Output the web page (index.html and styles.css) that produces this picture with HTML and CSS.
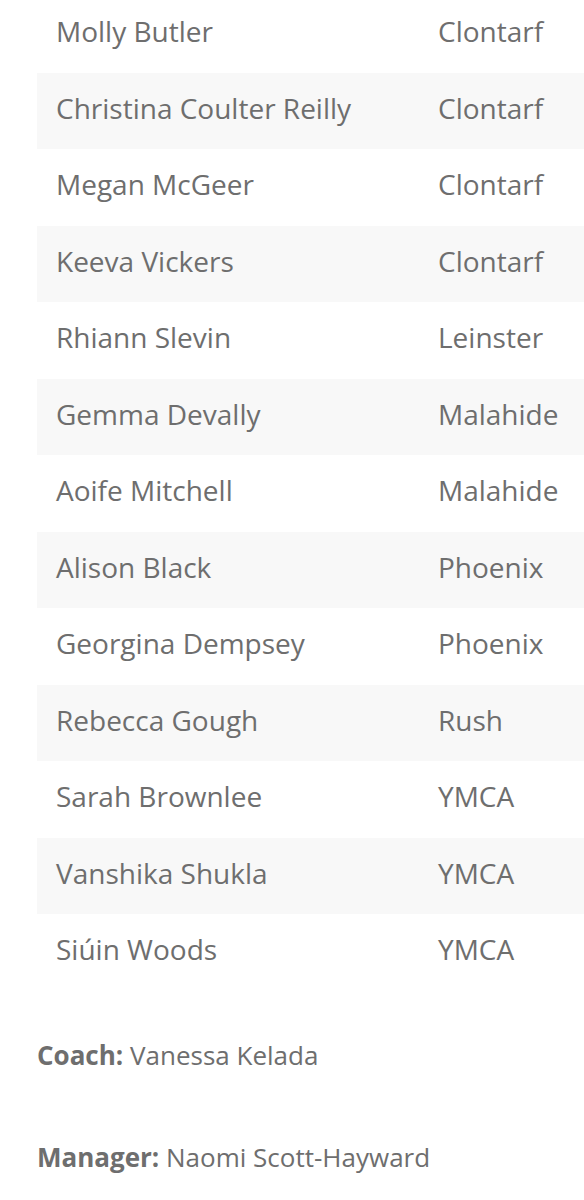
FILE: index.html
```html
<!DOCTYPE html>
<html>
<head>
<meta charset="utf-8">
<link rel="stylesheet" href="styles.css">
</head>
<body>
<div class="page">
  <table class="squad">
    <tbody>
      <tr><td class="name">Molly Butler</td><td class="club">Clontarf</td></tr>
      <tr><td class="name">Christina Coulter Reilly</td><td class="club">Clontarf</td></tr>
      <tr><td class="name">Megan McGeer</td><td class="club">Clontarf</td></tr>
      <tr><td class="name">Keeva Vickers</td><td class="club">Clontarf</td></tr>
      <tr><td class="name">Rhiann Slevin</td><td class="club">Leinster</td></tr>
      <tr><td class="name">Gemma Devally</td><td class="club">Malahide</td></tr>
      <tr><td class="name">Aoife Mitchell</td><td class="club">Malahide</td></tr>
      <tr><td class="name">Alison Black</td><td class="club">Phoenix</td></tr>
      <tr><td class="name">Georgina Dempsey</td><td class="club">Phoenix</td></tr>
      <tr><td class="name">Rebecca Gough</td><td class="club">Rush</td></tr>
      <tr><td class="name">Sarah Brownlee</td><td class="club">YMCA</td></tr>
      <tr><td class="name">Vanshika Shukla</td><td class="club">YMCA</td></tr>
      <tr><td class="name">Siúin Woods</td><td class="club">YMCA</td></tr>
    </tbody>
  </table>
  <p class="staff"><strong>Coach:</strong> Vanessa Kelada</p>
  <p class="staff"><strong>Manager:</strong> Naomi Scott-Hayward</p>
</div>
</body>
</html>
```
FILE: styles.css
```css
html, body {
  margin: 0;
  padding: 0;
  background: #ffffff;
}
body {
  font-family: "Open Sans", "Noto Sans", sans-serif;
  color: #6e6e6e;
  overflow: hidden;
}
.page {
  padding-left: 37px;
}
.squad {
  border-collapse: collapse;
  width: 547px;
  margin-top: -4px;
  font-size: 28px;
}
.squad tr {
  height: 76.5px;
}
.squad tr:nth-child(even) {
  background: #f8f8f8;
}
.squad td {
  padding: 0 0 6px 19px;
  vertical-align: middle;
  white-space: nowrap;
}
.squad td.name {
  width: 363px;
}
.staff {
  margin: 0;
  font-size: 26px;
  line-height: 36px;
}
.staff:first-of-type {
  margin-top: 46px;
}
.staff + .staff {
  margin-top: 66px;
}
.staff strong {
  font-weight: 700;
}
```
